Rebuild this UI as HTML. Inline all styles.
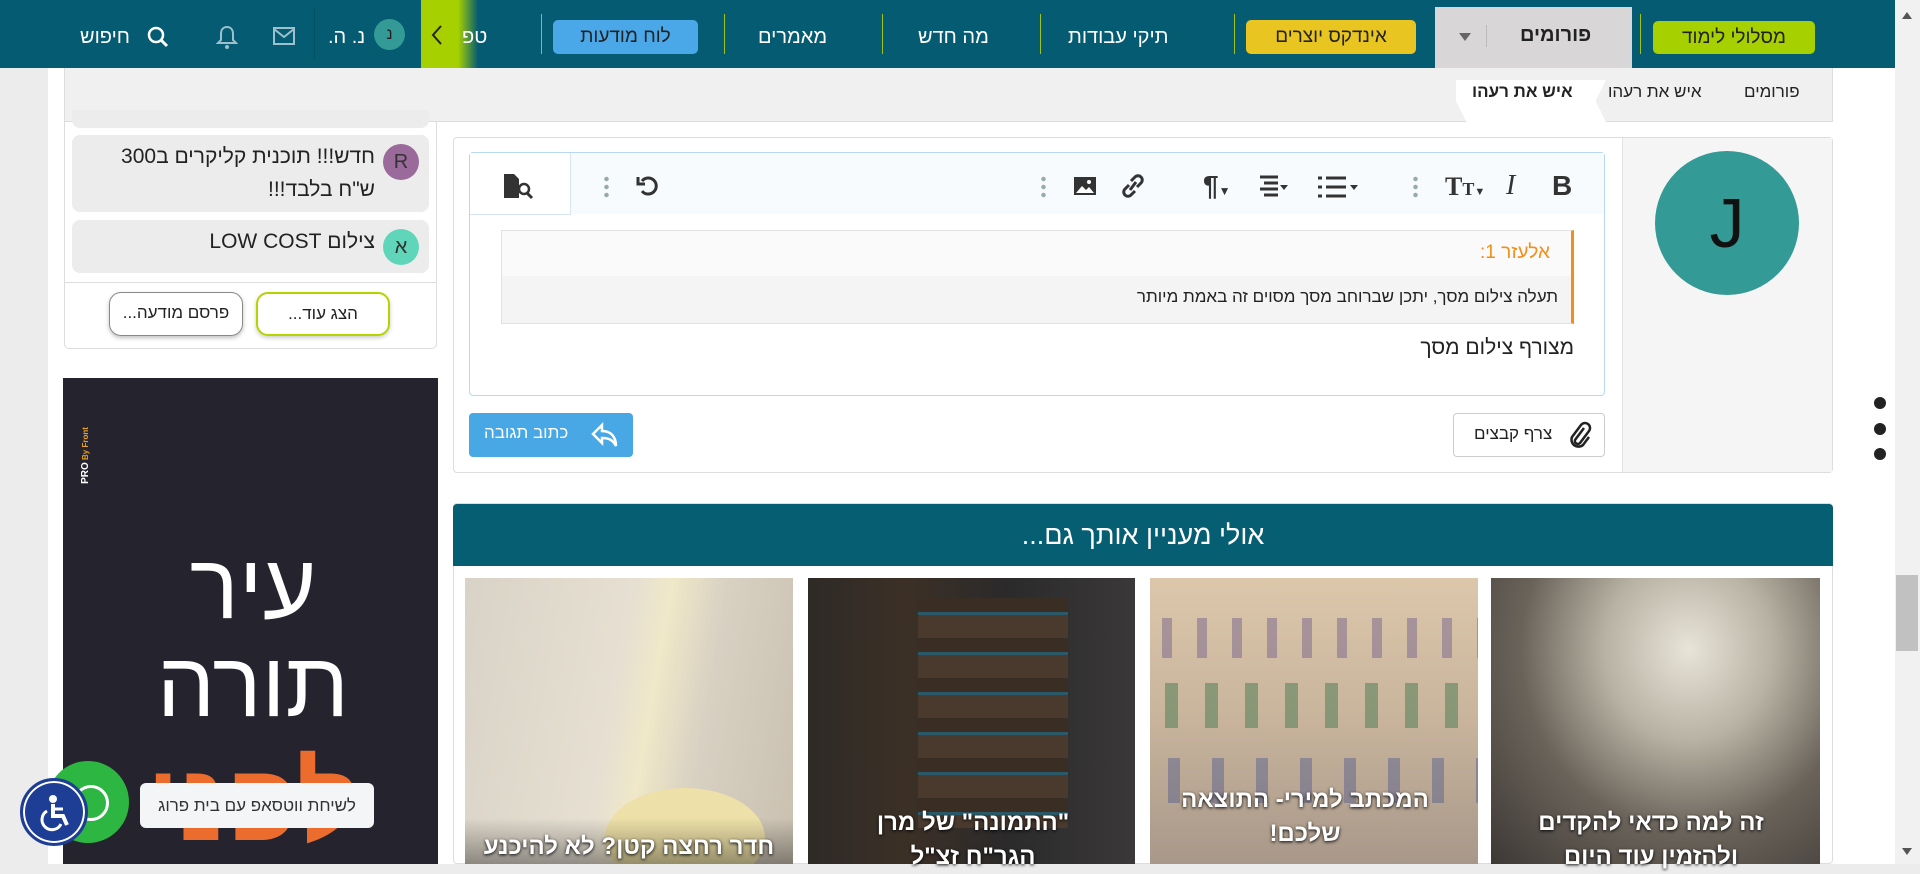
<!DOCTYPE html>
<html><head><meta charset="utf-8"><style>
*{box-sizing:border-box;margin:0;padding:0}
body{width:1920px;height:864px;overflow:hidden;background:#ececec;font-family:"Liberation Sans","Noto Sans CJK SC",sans-serif;position:relative;color:#222}
.a{position:absolute}
.nav{left:0;top:0;width:1895px;height:68px;background:#055c72}
.nt{color:#fff;font-size:20px;white-space:nowrap;direction:rtl}
.btn{border-radius:5px;text-align:center;font-size:19px;line-height:33px;direction:rtl}
.sep{width:1px;height:40px;top:14px;background:#9cc41a}
.ct{color:#fff;font-weight:bold;font-size:24px;direction:rtl;text-align:center;line-height:34px;text-shadow:0 1px 3px #000}
</style></head><body>
<div class="a" style="left:48px;top:68px;width:1847px;height:796px;background:#fff"></div>
<!-- nav -->
<div class="a nav"></div>
<div class="a btn" style="left:1653px;top:21px;width:162px;height:33px;background:#a6d000;color:#222">מסלולי לימוד</div>
<div class="a sep" style="left:1640px"></div>
<div class="a" style="left:1435px;top:7px;width:197px;height:61px;background:#d8d6d7"></div>
<div class="a" style="left:1520px;top:24px;font-size:20px;font-weight:bold;color:#222">פורומים</div>
<div class="a" style="left:1459px;top:33px;width:0;height:0;border-left:6px solid transparent;border-right:6px solid transparent;border-top:8px solid #666"></div>
<div class="a" style="left:1486px;top:25px;width:1px;height:22px;background:#bbb"></div>
<div class="a btn" style="left:1246px;top:20px;width:170px;height:34px;background:#e8c520;color:#222">אינדקס יוצרים</div>
<div class="a sep" style="left:1234px"></div>
<div class="a nt" style="left:1068px;top:26px">תיקי עבודות</div>
<div class="a sep" style="left:1040px"></div>
<div class="a nt" style="left:918px;top:26px">מה חדש</div>
<div class="a sep" style="left:882px"></div>
<div class="a nt" style="left:758px;top:26px">מאמרים</div>
<div class="a sep" style="left:724px"></div>
<div class="a btn" style="left:553px;top:20px;width:145px;height:34px;background:#4aa8e8;color:#222">לוח מודעות</div>
<div class="a sep" style="left:541px"></div>
<div class="a" style="left:421px;top:0;width:57px;height:68px;background:linear-gradient(90deg,#a6d000 0,#a6d000 65%,#055c72 100%)"></div>
<svg class="a" style="left:430px;top:24px" width="14" height="22" viewBox="0 0 14 22"><path d="M11 2L3 11l8 9" fill="none" stroke="#222" stroke-width="2"/></svg>
<div class="a nt" style="left:462px;top:26px">טפ</div>
<div class="a" style="left:314px;top:8px;width:1px;height:52px;background:#04505f"></div>
<div class="a" style="left:374px;top:19px;width:31px;height:31px;border-radius:50%;background:#339a96;color:#222;text-align:center;line-height:31px;font-size:16px">נ</div>
<div class="a nt" style="left:328px;top:26px">נ. ה.</div>
<svg class="a" style="left:272px;top:26px" width="24" height="20" viewBox="0 0 24 20"><rect x="2" y="2" width="20" height="16" fill="none" stroke="#9cc0cc" stroke-width="2"/><path d="M2 3l10 8 10-8" fill="none" stroke="#9cc0cc" stroke-width="2"/></svg>
<svg class="a" style="left:216px;top:24px" width="22" height="26" viewBox="0 0 22 26"><path d="M11 3c-4 0-6 3-6 7v6l-3 3h18l-3-3v-6c0-4-2-7-6-7z" fill="none" stroke="#9cc0cc" stroke-width="2"/><circle cx="11" cy="23" r="2" fill="#9cc0cc"/></svg>
<svg class="a" style="left:146px;top:25px" width="24" height="24" viewBox="0 0 24 24"><circle cx="10" cy="10" r="7" fill="none" stroke="#fff" stroke-width="2.5"/><path d="M15 15l6 6" stroke="#fff" stroke-width="3"/></svg>
<div class="a nt" style="left:80px;top:26px">חיפוש</div>
<!-- scrollbar -->
<div class="a" style="left:1895px;top:0;width:25px;height:864px;background:#f1f1f1"></div>
<div class="a" style="left:1896px;top:575px;width:22px;height:76px;background:#c1c1c1"></div>
<div class="a" style="left:1902px;top:12px;width:0;height:0;border-left:5px solid transparent;border-right:5px solid transparent;border-bottom:7px solid #555"></div>
<div class="a" style="left:1902px;top:848px;width:0;height:0;border-left:5px solid transparent;border-right:5px solid transparent;border-top:7px solid #555"></div>
<!-- breadcrumb -->
<div class="a" style="left:64px;top:68px;width:1769px;height:54px;background:#f0f0f0;border-bottom:1px solid #ddd;border-left:1px solid #ddd;border-right:1px solid #ddd"></div>
<div class="a" style="left:1456px;top:80px;width:150px;height:42px;background:#fff;clip-path:polygon(0 0,100% 0,93% 50%,100% 100%,7% 100%,0 50%)"></div>
<div class="a" style="left:1744px;top:82px;font-size:17px;direction:rtl">פורומים</div>
<div class="a" style="left:1608px;top:82px;font-size:17px;direction:rtl">איש את רעהו</div>
<div class="a" style="left:1472px;top:82px;font-size:17px;font-weight:bold;direction:rtl">איש את רעהו</div>
<!-- sidebar widget -->
<div class="a" style="left:64px;top:122px;width:373px;height:227px;border:1px solid #ddd;border-top:none;border-radius:0 0 5px 5px;background:#fff"></div>
<div class="a" style="left:72px;top:110px;width:357px;height:18px;background:#ececec;border-radius:0 0 8px 8px"></div>
<div class="a" style="left:72px;top:135px;width:357px;height:77px;background:#ececec;border-radius:8px"></div>
<div class="a" style="left:383px;top:144px;width:36px;height:36px;border-radius:50%;background:#9a6a9a;color:#333;text-align:center;line-height:36px;font-size:20px">R</div>
<div class="a" style="left:90px;top:140px;width:285px;font-size:21px;line-height:33px;direction:rtl;text-align:right">חדש!!! תוכנית קליקרים ב300 ש"ח בלבד!!!</div>
<div class="a" style="left:72px;top:220px;width:357px;height:53px;background:#ececec;border-radius:8px"></div>
<div class="a" style="left:383px;top:229px;width:36px;height:36px;border-radius:50%;background:#5fd6b9;color:#333;text-align:center;line-height:36px;font-size:20px">א</div>
<div class="a" style="left:120px;top:230px;width:255px;font-size:21px;direction:rtl;text-align:right">צילום LOW COST</div>
<div class="a" style="left:64px;top:282px;width:373px;height:1px;background:#ddd"></div>
<div class="a" style="left:256px;top:292px;width:134px;height:44px;border:2px solid #b5d300;border-radius:12px;text-align:center;line-height:40px;font-size:17px;direction:rtl;box-shadow:0 2px 4px rgba(0,0,0,.2)">הצג עוד...</div>
<div class="a" style="left:109px;top:292px;width:134px;height:44px;border:1.5px solid #888;border-radius:12px;text-align:center;line-height:40px;font-size:17px;direction:rtl;box-shadow:0 2px 4px rgba(0,0,0,.25)">פרסם מודעה...</div>
<!-- ad -->
<div class="a" style="left:63px;top:378px;width:375px;height:486px;background:#25242e;overflow:hidden">
<div class="a" style="left:-6px;top:72px;transform:rotate(-90deg);color:#fff;font-size:10px;font-weight:bold;white-space:nowrap">PRO<span style="color:#e8a020;font-size:8px"> By Front</span></div>
<div class="a" style="left:60px;top:160px;width:260px;text-align:center;color:#fff;font-size:92px;line-height:98px;direction:rtl">עיר<br>תורה</div>
<div class="a" style="left:80px;top:370px;width:220px;text-align:center;color:#ec6c2e;font-size:110px;line-height:110px;font-weight:bold;direction:rtl">לפני</div>
</div>
<!-- main post -->
<div class="a" style="left:453px;top:137px;width:1380px;height:336px;border:1px solid #ddd;border-radius:4px;background:#fff"></div>
<div class="a" style="left:1622px;top:138px;width:210px;height:334px;background:#f5f5f5;border-left:1px solid #e2e2e2"></div>
<div class="a" style="left:1655px;top:151px;width:144px;height:144px;border-radius:50%;background:#339a96;color:#111;text-align:center;line-height:144px;font-size:70px">J</div>
<div class="a" style="left:469px;top:152px;width:1136px;height:244px;border:1px solid #b8d8ef;border-radius:4px;background:#fff"></div>
<div class="a" style="left:470px;top:153px;width:1134px;height:61px;background:#f8fbfe"></div>
<div class="a" style="left:470px;top:153px;width:101px;height:62px;background:#fff;border-right:1px solid #d6e6f2;border-bottom:1px solid #d6e6f2"></div>
<svg class="a" style="left:500px;top:172px" width="36" height="28" viewBox="0 0 36 28"><path d="M4 2h10l5 5v19H4z" fill="#333"/><circle cx="24" cy="17" r="5" fill="#fff" stroke="#333" stroke-width="2.5"/><path d="M27 21l5 5" stroke="#333" stroke-width="3"/></svg>
<div class="a" style="left:604px;top:175px;width:5px;height:24px;background:radial-gradient(circle,#9aa 2px,transparent 2.5px) 0 0/5px 8px"></div>
<svg class="a" style="left:636px;top:173px" width="24" height="26" viewBox="0 0 24 26"><path d="M6 8a8 8 0 1 1 0 10" fill="none" stroke="#333" stroke-width="3"/><path d="M2 4v7h7" fill="none" stroke="#333" stroke-width="3"/></svg>
<div class="a" style="left:1041px;top:175px;width:5px;height:24px;background:radial-gradient(circle,#9aa 2px,transparent 2.5px) 0 0/5px 8px"></div>
<svg class="a" style="left:1073px;top:176px" width="24" height="20" viewBox="0 0 24 20"><rect x="1" y="1" width="22" height="18" fill="#333"/><path d="M3 17l6-7 4 4 3-3 5 6z" fill="#fff"/><circle cx="16" cy="6" r="2" fill="#fff"/></svg>
<svg class="a" style="left:1121px;top:173px" width="24" height="26" viewBox="0 0 24 26"><path d="M10 8l4-4a4 4 0 0 1 6 6l-4 4M14 18l-4 4a4 4 0 0 1-6-6l4-4M9 17l6-8" fill="none" stroke="#333" stroke-width="3"/></svg>
<div class="a" style="left:1203px;top:170px;font-size:28px;font-weight:bold;color:#333">¶<span style="font-size:12px">▼</span></div>
<svg class="a" style="left:1258px;top:175px" width="30" height="24" viewBox="0 0 30 24"><path d="M2 2h18M6 8h14M2 14h18M6 20h14" stroke="#333" stroke-width="3"/><path d="M22 10l4 5 4-5z" fill="#333"/></svg>
<svg class="a" style="left:1318px;top:175px" width="42" height="24" viewBox="0 0 42 24"><path d="M0 3h4M0 12h4M0 21h4M8 3h20M8 12h20M8 21h20" stroke="#333" stroke-width="3"/><path d="M32 10l4 5 4-5z" fill="#333"/></svg>
<div class="a" style="left:1413px;top:175px;width:5px;height:24px;background:radial-gradient(circle,#9aa 2px,transparent 2.5px) 0 0/5px 8px"></div>
<div class="a" style="left:1445px;top:172px;font-size:26px;font-weight:bold;color:#333;font-family:'Liberation Serif',serif">T<span style="font-size:18px">T</span><span style="font-size:11px">▼</span></div>
<div class="a" style="left:1506px;top:170px;font-size:28px;font-style:italic;color:#333;font-family:'Liberation Serif',serif">I</div>
<div class="a" style="left:1552px;top:170px;font-size:28px;font-weight:bold;color:#333">B</div>
<div class="a" style="left:501px;top:230px;width:1073px;height:94px;background:#f4f4f4;border:1px solid #e2e2e2;border-right:3px solid #f0901a"></div>
<div class="a" style="left:502px;top:231px;width:1069px;height:45px;background:#fafafa"></div>
<div class="a" style="left:1480px;top:242px;font-size:19px;color:#f0901a;direction:rtl">אלעזר 1:</div>
<div class="a" style="left:800px;top:287px;width:758px;text-align:right;font-size:17px;direction:rtl">תעלה צילום מסך, יתכן שברוחב מסך מסוים זה באמת מיותר</div>
<div class="a" style="left:1200px;top:336px;width:374px;text-align:right;font-size:21px;direction:rtl">מצורף צילום מסך</div>
<div class="a" style="left:469px;top:413px;width:164px;height:44px;background:#47a8e5;border-radius:4px"></div>
<div class="a" style="left:484px;top:423px;font-size:17px;color:#fff;direction:rtl">כתוב תגובה</div>
<svg class="a" style="left:590px;top:421px" width="30" height="28" viewBox="0 0 30 28"><path d="M12 4L3 13l9 9v-5c7 0 11 2 14 8 0-9-5-15-14-15z" fill="none" stroke="#fff" stroke-width="2.5"/></svg>
<div class="a" style="left:1453px;top:413px;width:152px;height:44px;border:1px solid #ccc;border-radius:4px;background:#fff"></div>
<div class="a" style="left:1474px;top:424px;font-size:17px;direction:rtl">צרף קבצים</div>
<svg class="a" style="left:1568px;top:420px" width="24" height="30" viewBox="0 0 24 30"><path d="M16 8L7 20a3 3 0 0 0 5 3l9-12a5 5 0 0 0-8-6L4 17a7 7 0 0 0 11 8l6-8" fill="none" stroke="#222" stroke-width="2.5"/></svg>
<!-- dots right -->
<div class="a" style="left:1874px;top:397px;width:12px;height:12px;border-radius:50%;background:#222"></div>
<div class="a" style="left:1874px;top:423px;width:12px;height:12px;border-radius:50%;background:#222"></div>
<div class="a" style="left:1874px;top:448px;width:12px;height:12px;border-radius:50%;background:#222"></div>
<!-- related -->
<div class="a" style="left:453px;top:503px;width:1380px;height:361px;border:1px solid #ddd;border-radius:4px;background:#fff"></div>
<div class="a" style="left:453px;top:504px;width:1380px;height:62px;background:#055e72;border-radius:4px 4px 0 0;color:#fff;text-align:center;font-size:27px;line-height:62px;direction:rtl">אולי מעניין אותך גם...</div>
<div class="a" style="left:465px;top:578px;width:328px;height:286px;background:linear-gradient(100deg,#d9d2c6 0,#e6dfd2 45%,#f0e8c8 55%,#d8d0c2 70%,#c9c0b0 100%);overflow:hidden">
<div class="a" style="left:140px;top:210px;width:160px;height:100px;border-radius:50%;background:#ede0a8"></div>
<div class="a" style="left:0;top:240px;width:328px;height:50px;background:linear-gradient(transparent,rgba(0,0,0,.4))"></div>
<div class="a ct" style="left:0;top:252px;width:328px">חדר רחצה קטן? לא להיכנע</div></div>
<div class="a" style="left:808px;top:578px;width:327px;height:286px;background:linear-gradient(90deg,#2e2a26 0,#3c3026 30%,#2b2a2a 60%,#3a3838 100%)">
<div class="a" style="left:110px;top:20px;width:150px;height:230px;background:repeating-linear-gradient(180deg,#3a2e24 0 14px,#2a5a6a 14px 17px,#4a3a2e 17px 40px)"></div>
<div class="a ct" style="left:40px;top:228px;width:250px">"התמונה" של מרן הגר"ח זצ"ל</div></div>
<div class="a" style="left:1150px;top:578px;width:328px;height:286px;background:linear-gradient(180deg,#dcc7ab 0,#c8b49c 50%,#a8988a 100%)">
<div class="a" style="left:0;top:40px;width:328px;height:40px;background:repeating-linear-gradient(90deg,transparent 0 12px,rgba(120,100,140,.5) 12px 22px,transparent 22px 35px)"></div>
<div class="a" style="left:0;top:105px;width:328px;height:45px;background:repeating-linear-gradient(90deg,transparent 0 15px,rgba(70,120,80,.5) 15px 28px,transparent 28px 40px)"></div>
<div class="a" style="left:0;top:180px;width:328px;height:45px;background:repeating-linear-gradient(90deg,transparent 0 18px,rgba(80,90,140,.45) 18px 30px,transparent 30px 44px)"></div>
<div class="a ct" style="left:10px;top:205px;width:290px">המכתב למירי- התוצאה שלכם!</div></div>
<div class="a" style="left:1491px;top:578px;width:329px;height:286px;background:radial-gradient(ellipse at 60% 25%,#e8e4d8 0,#b8b2a4 30%,#6a635a 60%,#3c3834 100%)">
<div class="a ct" style="left:10px;top:228px;width:300px">זה למה כדאי להקדים ולהזמין עוד היום</div></div>
<!-- floating -->
<div class="a" style="left:47px;top:761px;width:82px;height:82px;border-radius:50%;background:#2db742"></div>
<div class="a" style="left:73px;top:785px;width:36px;height:36px;border-radius:50%;border:3px solid #fff"></div>
<div class="a" style="left:20px;top:778px;width:68px;height:68px;border-radius:50%;background:#1e3e96;border:3px solid #1e3e96;box-shadow:inset 0 0 0 2px #fff"></div>
<svg class="a" style="left:33px;top:791px" width="42" height="42" viewBox="0 0 42 42"><circle cx="20" cy="8" r="4" fill="#fff"/><path d="M20 13v12h10l4 9" fill="none" stroke="#fff" stroke-width="4"/><path d="M20 18h10" stroke="#fff" stroke-width="3"/><path d="M14 20a10 10 0 1 0 14 13" fill="none" stroke="#fff" stroke-width="3"/></svg>
<div class="a" style="left:140px;top:783px;width:234px;height:45px;background:#f4f5f7;border-radius:6px;text-align:center;line-height:45px;font-size:17px;color:#333;direction:rtl">לשיחת ווטסאפ עם בית פרוג</div>
</body></html>
